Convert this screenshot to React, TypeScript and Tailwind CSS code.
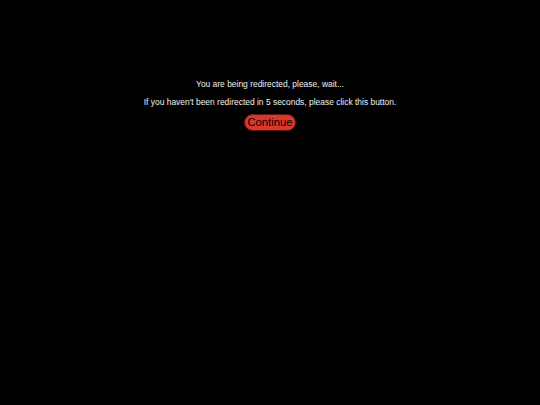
export default function App() {
  return (
    <div className="flex min-h-[405px] w-full flex-col items-center bg-black pt-[79px] font-['Liberation_Sans',Arial,sans-serif]">
      <p className="m-0 text-[8.45px] leading-[10px] text-[#f0f0f0]">You are being redirected, please, wait...</p>
      <p className="m-0 mt-[8px] text-[8.45px] leading-[10px] text-[#f0f0f0]">
        If you haven't been redirected in 5 seconds, please click this button.
      </p>
      <button
        type="button"
        className="mt-[7px] flex h-[16.5px] items-center rounded-full border border-[#5a1410] bg-[#d9382b] px-[2.4px] text-[11.3px] leading-none text-black"
      >
        Continue
      </button>
    </div>
  );
}
